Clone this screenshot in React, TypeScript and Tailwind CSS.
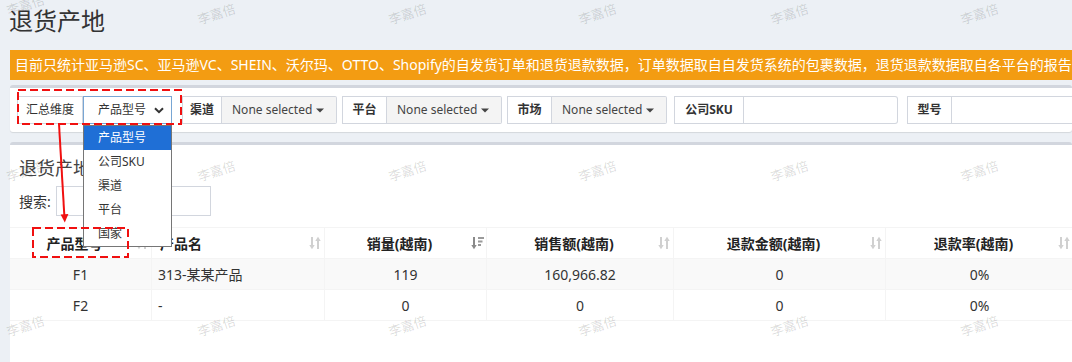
import React from "react";

const SortBoth = () => (
  <svg width="12" height="14" viewBox="0 0 12 14">
    <path d="M3 1v8.5" stroke="#d0d0d0" strokeWidth="2" />
    <path d="M0.3 9h5.4L3 13.2z" fill="#d0d0d0" />
    <path d="M9 13V4.5" stroke="#d0d0d0" strokeWidth="2" />
    <path d="M6.3 5h5.4L9 0.8z" fill="#d0d0d0" />
  </svg>
);

const SortDesc = () => (
  <svg width="13" height="14" viewBox="0 0 13 14">
    <path d="M3 1v8.5" stroke="#8a8a8a" strokeWidth="2" />
    <path d="M0.3 9h5.4L3 13.2z" fill="#8a8a8a" />
    <rect x="7" y="1" width="6" height="2" fill="#9a9a9a" />
    <rect x="7" y="4.5" width="4.5" height="2" fill="#9a9a9a" />
    <rect x="7" y="8" width="3" height="2" fill="#9a9a9a" />
  </svg>
);

const Caret = () => (
  <svg width="8" height="5" viewBox="0 0 8 5" className="ml-[4px]">
    <path d="M0 0.5h8L4 4.5z" fill="#444" />
  </svg>
);

const Chevron = () => (
  <svg width="10" height="7" viewBox="0 0 10 7">
    <path d="M1 1.2l4 4 4-4" stroke="#333" strokeWidth="2" fill="none" />
  </svg>
);

const cols = [
  { title: "产品型号", align: "center", sort: "both" },
  { title: "产品名", align: "left", sort: "both" },
  { title: "销量(越南)", align: "center", sort: "desc" },
  { title: "销售额(越南)", align: "center", sort: "both" },
  { title: "退款金额(越南)", align: "center", sort: "both" },
  { title: "退款率(越南)", align: "center", sort: "both" },
];

const rows = [
  ["F1", "313-某某产品", "119", "160,966.82", "0", "0%"],
  ["F2", "-", "0", "0", "0", "0%"],
];

const wmX = [26, 217, 408, 598, 790, 980];
const wmY = [14, 171, 326];

function NoneSelected({ label, addonW, btnW, ml }: { label: string; addonW: string; btnW: string; ml: string }) {
  return (
    <div className={`flex h-[28px] ${ml}`}>
      <div className={`${addonW} flex items-center justify-center border border-[#d2d6de] bg-white text-[12px] font-bold text-[#333]`}>
        {label}
      </div>
      <div className={`${btnW} flex items-center pl-[10px] border border-l-0 border-[#d2d6de] bg-[#f4f4f4] text-[12px] text-[#444] rounded-r-[2px]`}>
        None selected
        <Caret />
      </div>
    </div>
  );
}

export default function App() {
  return (
    <div className="relative w-[1072px] h-[362px] overflow-hidden bg-[#ecf0f5] font-['Noto_Sans','Noto_Sans_CJK_SC',sans-serif] text-[#333]">
      <div className="pl-[9px] pt-[5px] h-[50px]">
        <h1 className="text-[24px] leading-[32px] text-[#333]">退货产地</h1>
      </div>

      <div className="ml-[10px] h-[30px] bg-[#f39c12] text-white text-[14px] leading-[30px] pl-[5px] whitespace-nowrap overflow-hidden">
        目前只统计亚马逊SC、亚马逊VC、SHEIN、沃尔玛、OTTO、Shopify的自发货订单和退货退款数据，订单数据取自自发货系统的包裹数据，退货退款数据取自各平台的报告
      </div>

      <div className="ml-[10px] mt-[5px] h-[47px] border-t-[3px] border-[#d2d6de] bg-white rounded-[3px] shadow-[0_1px_1px_rgba(0,0,0,0.1)] pt-[8px] pl-[7px] flex">
        <div className="flex h-[28px]">
          <div className="w-[66px] flex items-center justify-center border border-[#d2d6de] bg-white text-[12px] text-[#333]">
            汇总维度
          </div>
          <div className="w-[89px] flex items-center justify-between pl-[14px] pr-[7px] border border-[#78a6d4] bg-white text-[12px] text-[#333]">
            产品型号
            <Chevron />
          </div>
        </div>
        <NoneSelected label="渠道" addonW="w-[40px]" btnW="w-[115px]" ml="ml-[10px]" />
        <NoneSelected label="平台" addonW="w-[45px]" btnW="w-[115px]" ml="ml-[5px]" />
        <NoneSelected label="市场" addonW="w-[45px]" btnW="w-[115px]" ml="ml-[5px]" />
        <div className="flex h-[28px] ml-[7px]">
          <div className="w-[70px] flex items-center justify-center border border-[#d2d6de] bg-white text-[12px] font-bold text-[#333]">
            公司SKU
          </div>
          <div className="w-[154px] border border-l-0 border-[#d2d6de] bg-white rounded-r-[3px]" />
        </div>
        <div className="flex h-[28px] ml-[9px]">
          <div className="w-[45px] flex items-center justify-center border border-[#d2d6de] bg-white text-[12px] font-bold text-[#333]">
            型号
          </div>
          <div className="w-[160px] border border-l-0 border-[#d2d6de] bg-white" />
        </div>
      </div>

      <div className="ml-[10px] mt-[10px] h-[230px] border-t-[3px] border-[#d2d6de] bg-white rounded-t-[3px]">
        <div className="pl-[9px] pt-[10px] text-[18px] leading-[26px] text-[#444]">退货产地</div>
        <div className="flex items-center pl-[9px] mt-[5px] h-[30px] text-[14px] text-[#333]">
          <span>搜索:</span>
          <div className="ml-[5px] w-[155px] h-[30px] border border-[#d2d6de] bg-white" />
        </div>

        <div className="mt-[11px] w-[1074px]">
          <div className="grid grid-cols-[142px_173px_162px_187px_212px_188px] h-[32px] border-t border-b border-[#f4f4f4]">
            {cols.map((c, i) => (
              <div key={i} className="flex items-center pl-[8px] pr-[2px] border-r border-[#f4f4f4] text-[14px] font-bold text-[#222]">
                <span className={c.align === "left" ? "flex-1 text-left" : "flex-1 text-center"}>{c.title}</span>
                <span className="ml-[5px] w-[13px] flex items-center">{c.sort === "desc" ? <SortDesc /> : <SortBoth />}</span>
              </div>
            ))}
          </div>
          {rows.map((r, ri) => (
            <div
              key={ri}
              className={`grid grid-cols-[142px_173px_162px_187px_212px_188px] h-[31px] border-b border-[#f4f4f4] ${ri === 0 ? "bg-[#f9f9f9]" : "bg-white"}`}
            >
              {r.map((v, ci) => (
                <div
                  key={ci}
                  className={`flex items-center border-r border-[#f4f4f4] text-[14px] text-[#333] ${ci === 1 ? "justify-start pl-[6px]" : "justify-center"}`}
                >
                  {v}
                </div>
              ))}
            </div>
          ))}
        </div>
      </div>

      {/* native select dropdown list */}
      <div className="absolute left-[83px] top-[125px] w-[89px] border border-[#767676] bg-white text-[12px] text-[#333] z-10">
        <div className="h-[24px] leading-[24px] pl-[14px] bg-[#1f6fd6] text-white">产品型号</div>
        <div className="h-[24px] leading-[24px] pl-[14px]">公司SKU</div>
        <div className="h-[24px] leading-[24px] pl-[14px]">渠道</div>
        <div className="h-[24px] leading-[24px] pl-[14px]">平台</div>
        <div className="h-[24px] leading-[24px] pl-[14px]">国家</div>
      </div>

      {/* watermarks */}
      {wmY.map((y, yi) =>
        wmX.map((x, xi) => (
          <span
            key={`${yi}-${xi}`}
            className="absolute pointer-events-none text-[13px] leading-[16px] text-black/15 rotate-[-18deg] whitespace-nowrap z-20"
            style={{ left: x - 20, top: (yi === 0 && xi === 0 ? 5 : y) - 8 }}
          >
            李嘉倍
          </span>
        ))
      )}

      {/* red annotations */}
      <svg className="absolute left-0 top-0 pointer-events-none z-30" width="1072" height="362" viewBox="0 0 1072 362">
        <rect x="18" y="90" width="163" height="34" fill="none" stroke="#f01010" strokeWidth="2" strokeDasharray="8 4" />
        <rect x="33" y="228" width="95" height="29" fill="none" stroke="#f01010" strokeWidth="2" strokeDasharray="8 4" />
        <path d="M59 124L64.3 215" stroke="#f01010" strokeWidth="2" />
        <path d="M60.6 214.5L68.4 214L64.8 222.5z" fill="#f01010" />
      </svg>
    </div>
  );
}
